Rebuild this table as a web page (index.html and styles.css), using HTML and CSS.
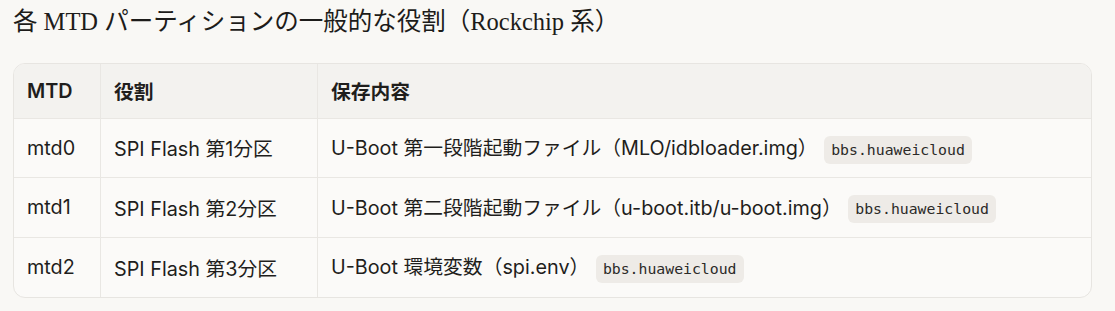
FILE: index.html
```html
<!DOCTYPE html>
<html lang="ja">
<head>
<meta charset="utf-8">
<link rel="stylesheet" href="styles.css">
</head>
<body>
<h3 class="title">各 MTD パーティションの一般的な役割（Rockchip 系）</h3>
<div class="table-wrap">
  <table class="mtd-table">
    <thead>
      <tr><th class="c1">MTD</th><th class="c2">役割</th><th>保存内容</th></tr>
    </thead>
    <tbody>
      <tr><td>mtd0</td><td>SPI Flash 第1分区</td><td>U-Boot 第一段階起動ファイル（MLO/idbloader.img） <span class="chip">bbs.huaweicloud</span></td></tr>
      <tr><td>mtd1</td><td>SPI Flash 第2分区</td><td>U-Boot 第二段階起動ファイル（u-boot.itb/u-boot.img） <span class="chip">bbs.huaweicloud</span></td></tr>
      <tr><td>mtd2</td><td>SPI Flash 第3分区</td><td>U-Boot 環境変数（spi.env） <span class="chip">bbs.huaweicloud</span></td></tr>
    </tbody>
  </table>
</div>
</body>
</html>
```

FILE: styles.css
```css
html, body {
  margin: 0;
  background: #f9f8f5;
}
body {
  padding: 0 23px 0 13px;
  color: #1f1e1c;
  font-family: Inter, "Noto Sans CJK JP", sans-serif;
}
.title {
  margin: 0;
  padding-top: 5px;
  height: 63px;
  box-sizing: border-box;
  font-family: "Liberation Serif", "Noto Sans CJK JP", serif;
  font-weight: 400;
  font-size: 24.5px;
  line-height: 34px;
  color: #1d1c1a;
}
.table-wrap {
  border: 1px solid #e7e5e1;
  border-radius: 12px;
  overflow: hidden;
  background: #fbfaf8;
}
.mtd-table {
  width: 100%;
  border-collapse: collapse;
  font-size: 19.8px;
}
.mtd-table th, .mtd-table td {
  text-align: left;
  padding: 0 13px;
  border-right: 1px solid #e9e7e3;
  border-bottom: 1px solid #e9e7e3;
  white-space: nowrap;
}
.mtd-table th:last-child, .mtd-table td:last-child {
  border-right: none;
}
.mtd-table tbody tr:last-child td {
  border-bottom: none;
}
.mtd-table thead tr {
  background: #f3f2ef;
  height: 54px;
}
.mtd-table th {
  font-weight: 600;
}
.mtd-table tbody tr {
  height: 59.6px;
}
.c1 { width: 60px; }
.c2 { width: 190px; }
.chip {
  display: inline-block;
  margin-left: 1px;
  padding: 0 7px;
  height: 28px;
  line-height: 28px;
  border-radius: 6px;
  background: #eeebe7;
  font-family: "DejaVu Sans Mono", "Liberation Mono", monospace;
  font-size: 14.8px;
  color: #2b2a28;
  vertical-align: middle;
}
```
